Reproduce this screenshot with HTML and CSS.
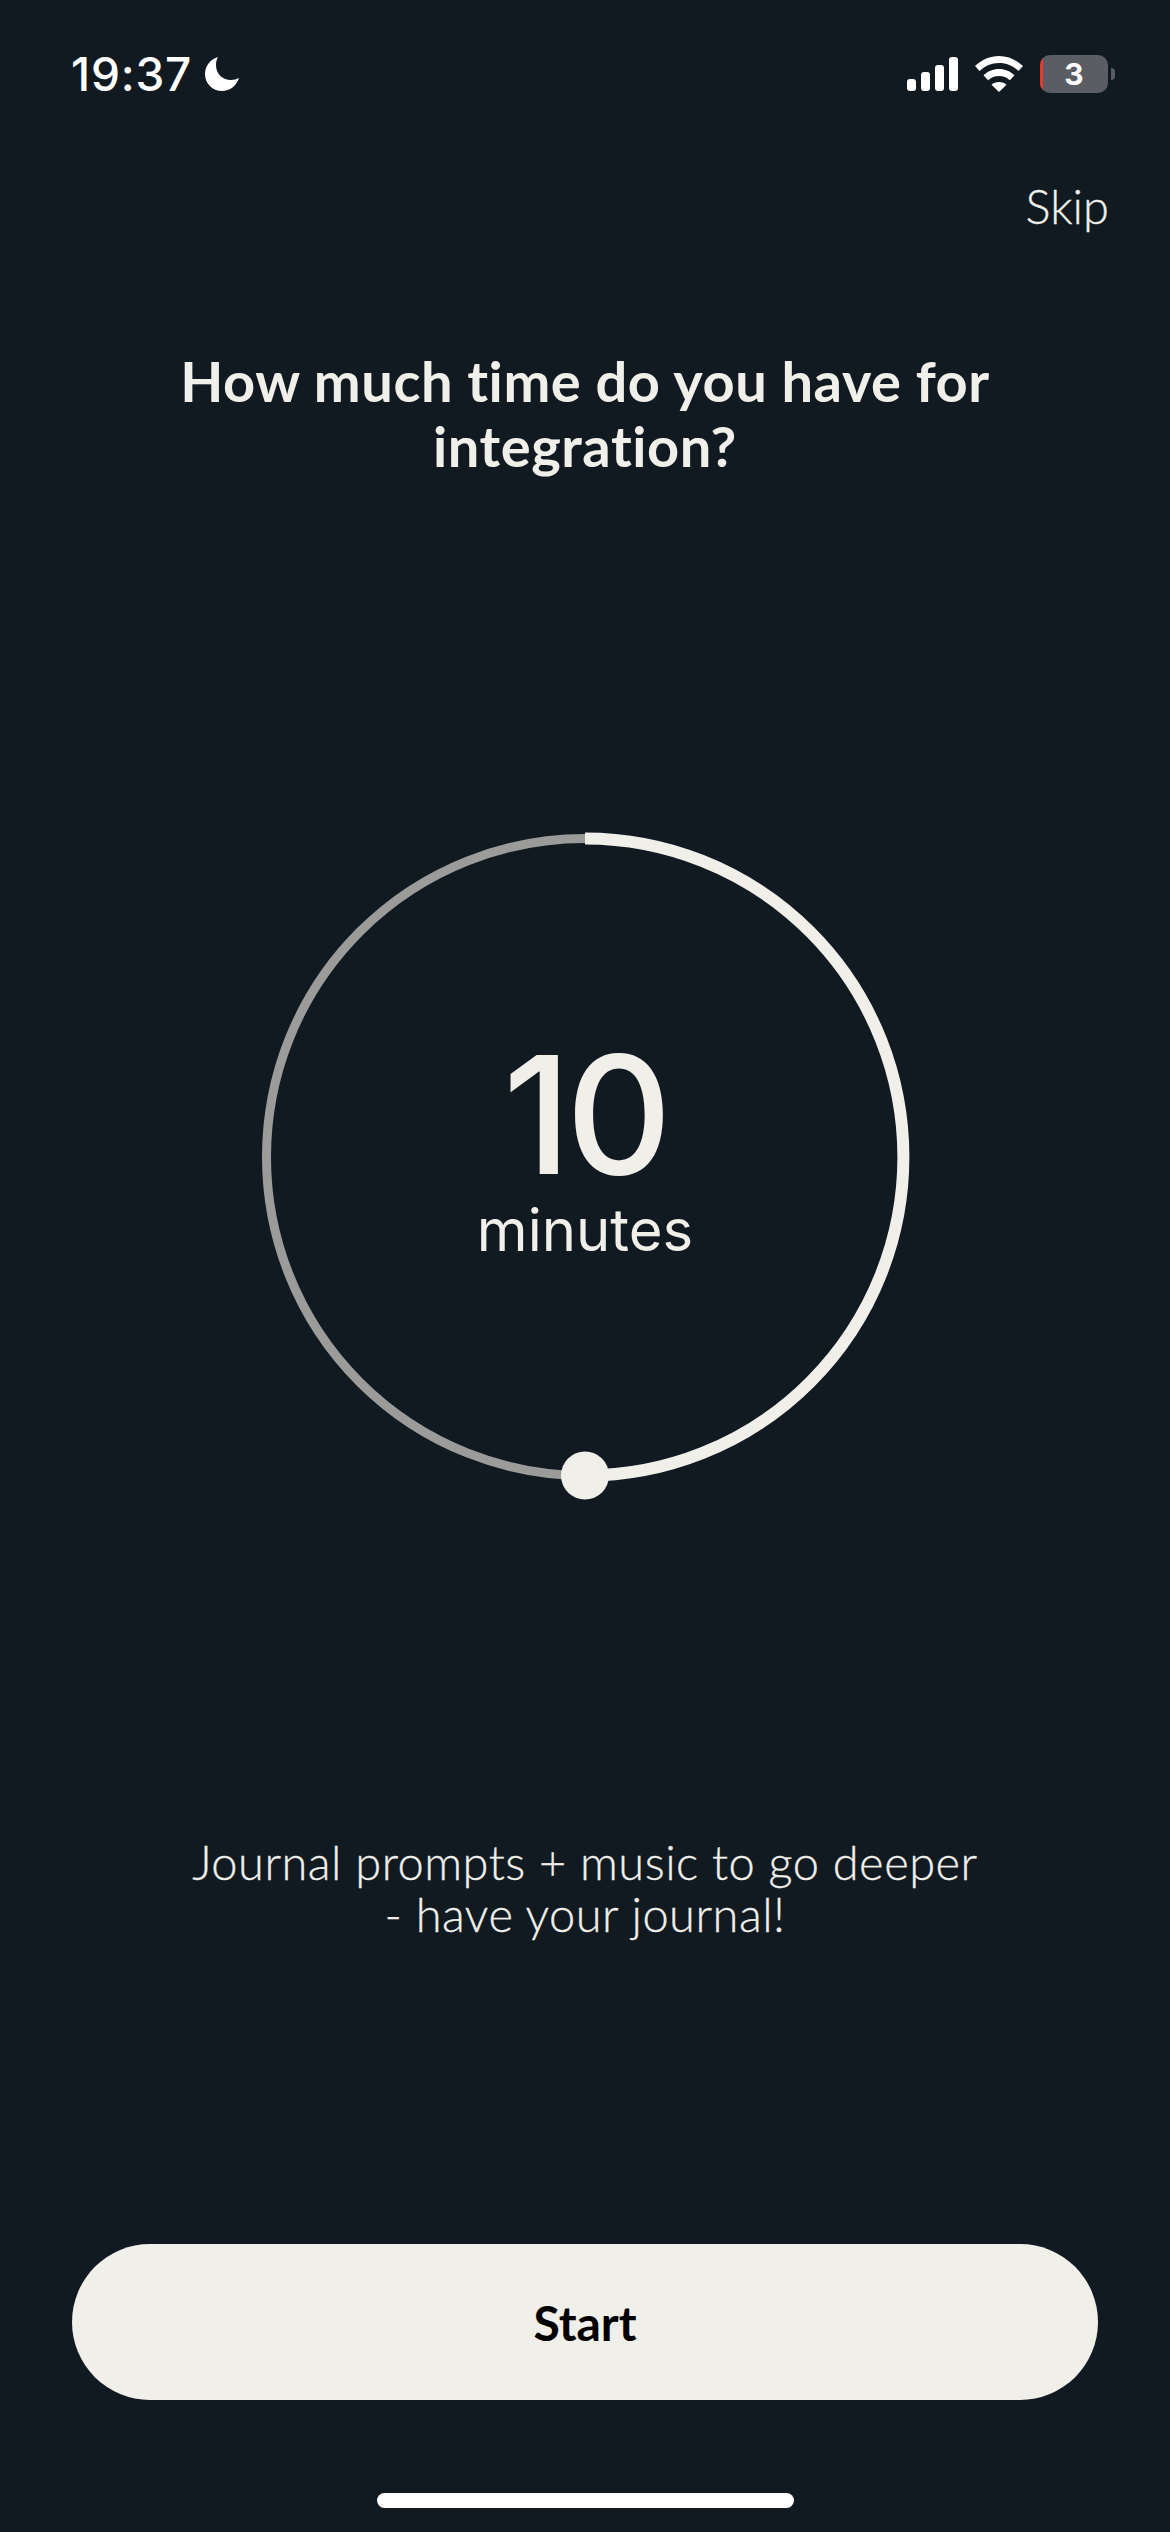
FILE: index.html
```html
<!DOCTYPE html>
<html lang="en">
<head>
  <meta charset="UTF-8">
  <title>Integration timer</title>
  <link rel="stylesheet" href="styles.css">
</head>
<body>
  <div class="screen">
    <div class="status-bar">
      <div class="status-left">
        <span class="clock">19:37</span>
        <svg class="moon" width="36" height="36" viewBox="0 0 36 36">
          <path d="M14 1C7 3 1 9.500 1 18c0 9.500 7.500 17 17 17 8 0 14.500-5.200 17-13-2.300 1.300-5 2-8 2-9 0-15-6.500-15-15 0-3 .7-5.800 2-8z" fill="#fff"/>
        </svg>
      </div>
      <div class="status-right">
        <svg class="signal" width="51" height="34" viewBox="0 0 51 34">
          <rect x="0" y="22" width="9" height="12" rx="3" fill="#fff"/>
          <rect x="14" y="15" width="9" height="19" rx="3" fill="#fff"/>
          <rect x="28" y="8" width="9" height="26" rx="3" fill="#fff"/>
          <rect x="42" y="0" width="9" height="34" rx="3" fill="#fff"/>
        </svg>
        <svg class="wifi" width="48" height="36" viewBox="0 0 48 36">
          <path d="M24 0C15 0 7 3.500 0 10l4.500 5C10 9.800 16.500 7 24 7s14 2.800 19.500 8l4.500-5C41 3.500 33 0 24 0z" fill="#fff"/>
          <path d="M24 13c-6 0-11.500 2.300-15.500 6.300l4.600 5C16 21.500 19.800 20 24 20s8 1.500 10.900 4.300l4.600-5C35.500 15.300 30 13 24 13z" fill="#fff"/>
          <path d="M24 26c-3 0-5.500 1-7.500 2.800L24 36l7.500-7.200C29.500 27 27 26 24 26z" fill="#fff"/>
        </svg>
        <div class="battery">
          <div class="battery-body">
            <span class="battery-low"></span>
            <span class="battery-num">3</span>
          </div>
          <span class="battery-nub"></span>
        </div>
      </div>
    </div>

    <div class="skip-row">
      <span class="skip">Skip</span>
    </div>

    <h1 class="title">How much time do you have for<br>integration?</h1>

    <div class="timer">
      <svg class="dial" width="700" height="700" viewBox="0 0 700 700">
        <circle cx="350" cy="350" r="318.500" fill="none" stroke="#9b9b9a" stroke-width="9"/>
        <path d="M350 31.500A318.500 318.500 0 0 1 350 668.500" fill="none" stroke="#f0efea" stroke-width="12"/>
        <circle cx="350" cy="668.500" r="24" fill="#f0efea"/>
      </svg>
      <div class="timer-text">
        <div class="timer-value">10</div>
        <div class="timer-unit">minutes</div>
      </div>
    </div>

    <p class="note">Journal prompts + music to go deeper<br>- have your journal!</p>

    <button class="start">Start</button>

    <div class="home-bar"></div>
  </div>
</body>
</html>
```

FILE: styles.css
```css
body {
  margin: 0;
  background-color: #111a21;
  font-family: 'Lato', 'Liberation Sans', sans-serif;
  font-variant-ligatures: none;
  color: #f0efea;
}

.screen {
  width: 1170px;
  height: 2532px;
  overflow: hidden;
  display: flex;
  flex-direction: column;
}

.status-bar {
  display: flex;
  justify-content: space-between;
  align-items: center;
  height: 38px;
  margin-top: 55px;
  padding: 0 55px 0 71px;
}

.status-left {
  display: flex;
  align-items: center;
  gap: 12px;
}

.clock {
  font-family: 'Inter', sans-serif;
  font-size: 46px;
  font-weight: 500;
  line-height: 38px;
  letter-spacing: 0.8px;
  color: #fff;
}

.status-right {
  display: flex;
  align-items: center;
  gap: 17px;
}

.battery {
  display: flex;
  align-items: center;
  gap: 3px;
}

.battery-body {
  position: relative;
  width: 68px;
  height: 38px;
  border-radius: 10px;
  background-color: #5a5e64;
  overflow: hidden;
  display: flex;
  justify-content: center;
  align-items: center;
}

.battery-low {
  position: absolute;
  left: 0;
  top: 0;
  bottom: 0;
  width: 3px;
  background-color: #e8382c;
}

.battery-num {
  font-family: 'Inter', sans-serif;
  font-size: 30px;
  font-weight: 700;
  color: #fff;
}

.battery-nub {
  width: 4px;
  height: 12px;
  border-radius: 0 4px 4px 0;
  background-color: #5a5e64;
}

.skip-row {
  display: flex;
  justify-content: flex-end;
  padding-right: 61px;
  margin-top: 86px;
}

.skip {
  font-size: 47px;
  font-weight: 300;
  line-height: 54px;
  -webkit-text-stroke: 0.3px #f0efea;
}

.title {
  margin: 115px 0 0;
  font-size: 56px;
  font-weight: 700;
  line-height: 65px;
  letter-spacing: 0.55px;
  text-align: center;
}

.timer {
  display: grid;
  justify-items: center;
  align-items: center;
  margin-top: 329px;
}

.dial {
  grid-area: 1 / 1;
}

.timer-text {
  grid-area: 1 / 1;
  padding-bottom: 15px;
  text-align: center;
}

.timer-value {
  font-family: 'Inter', sans-serif;
  font-size: 164px;
  font-weight: 500;
  line-height: 160px;
  letter-spacing: -5px;
}

.timer-unit {
  font-family: 'Inter', sans-serif;
  font-size: 58px;
  font-weight: 400;
  line-height: 70px;
}

.note {
  margin: 329px 0 0;
  font-size: 47px;
  font-weight: 300;
  line-height: 52px;
  letter-spacing: 0.5px;
  text-align: center;
  -webkit-text-stroke: 0.3px #f0efea;
}

.start {
  align-self: center;
  width: 1026px;
  height: 156px;
  margin-top: 304px;
  border: none;
  border-radius: 78px;
  background-color: #f0efea;
  color: #000;
  font-family: 'Lato', sans-serif;
  font-size: 48px;
  font-weight: 700;
}

.home-bar {
  align-self: center;
  width: 417px;
  height: 15px;
  margin-top: 93px;
  border-radius: 8px;
  background-color: #fff;
}
```
